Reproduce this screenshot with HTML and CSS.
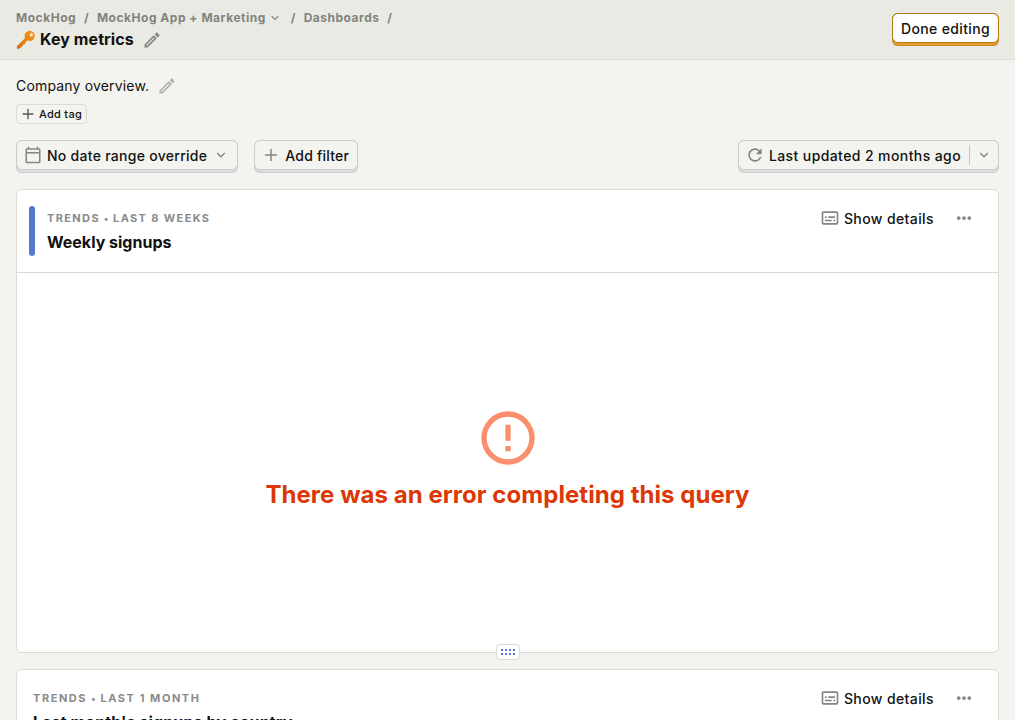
FILE: index.html
```html
<!DOCTYPE html>
<html lang="en">
<head>
<meta charset="utf-8">
<title>Key metrics</title>
<link rel="stylesheet" href="styles.css">
</head>
<body>
<svg class="sprite" aria-hidden="true">
  <symbol id="pencil" viewBox="0 0 24 24"><path d="M14.06 9.02l.92.92L5.92 19H5v-.92l9.06-9.06M17.66 3c-.25 0-.51.1-.7.29l-1.83 1.83 3.75 3.75 1.83-1.83c.39-.39.39-1.02 0-1.41l-2.34-2.34c-.2-.2-.45-.29-.71-.29zm-3.6 3.19L3 17.25V21h3.75L17.81 9.94l-3.75-3.75z"/></symbol>
  <symbol id="chevron" viewBox="0 0 24 24"><path d="M5.5 8.500l6.500 6.500 6.500-6.500" fill="none" stroke="currentColor" stroke-width="2.200"/></symbol>
  <symbol id="plus" viewBox="0 0 24 24"><path d="M11 4h2v7h7v2h-7v7h-2v-7H4v-2h7z"/></symbol>
  <symbol id="calendar" viewBox="0 0 24 24"><path d="M20 3h-1V1h-2v2H7V1H5v2H4c-1.100 0-2 .9-2 2v16c0 1.100.9 2 2 2h16c1.100 0 2-.9 2-2V5c0-1.100-.9-2-2-2zm0 18H4V10h16v11zm0-13H4V5h16v3z"/></symbol>
  <symbol id="refresh" viewBox="0 0 24 24"><path d="M17.65 6.35A7.958 7.958 0 0012 4c-4.420 0-7.990 3.580-7.990 8s3.570 8 7.990 8c3.730 0 6.840-2.550 7.730-6h-2.080A5.990 5.990 0 0112 18c-3.310 0-6-2.690-6-6s2.690-6 6-6c1.660 0 3.140.690 4.220 1.780L13 11h7V4l-2.350 2.350z"/></symbol>
  <symbol id="details" viewBox="0 0 24 24"><path d="M20 4H4c-1.100 0-2 .9-2 2v12c0 1.100.9 2 2 2h16c1.100 0 2-.9 2-2V6c0-1.100-.9-2-2-2zm0 14H4V6h16v12zM6 10h2v2H6zm0 4h8v2H6zm10 0h2v2h-2zm-6-4h8v2h-8z"/></symbol>
  <symbol id="dots" viewBox="0 0 24 24"><circle cx="5" cy="12" r="2.500"/><circle cx="12" cy="12" r="2.500"/><circle cx="19" cy="12" r="2.500"/></symbol>
  <symbol id="error" viewBox="0 0 24 24"><path d="M11 15h2v2h-2zm0-8h2v6h-2zm1-5a10 10 0 100 20 10 10 0 000-20zm0 18a8 8 0 110-16 8 8 0 010 16z"/></symbol>
</svg>

<header class="topbar">
  <div>
    <nav class="crumbs">
      <span>MockHog</span><span class="slash">/</span>
      <span>MockHog App + Marketing</span><svg class="icon crumb-caret"><use href="#chevron"/></svg><span class="slash">/</span>
      <span>Dashboards</span><span class="slash">/</span>
    </nav>
    <div class="title-row">
      <svg class="key" viewBox="0 0 20 20" role="img" aria-label="key">
        <defs><linearGradient id="gold" x1="1" y1="0" x2="0" y2="1"><stop offset="0" stop-color="#f79a12"/><stop offset="1" stop-color="#d96c12"/></linearGradient></defs>
        <path fill="url(#gold)" fill-rule="evenodd" d="M10.200 2.300c2.400-2.300 5.300-2 7.200-.1s2 5-.1 7.200c-1.700 1.700-4 1.900-5.700.9L9.300 12.500l-.2 1.500-1.600.2-.3 1.500-1.500.2-.3 1.400L3 18.700l-2 .2-.1-2.600 8.200-8.400c-.9-1.700-.6-4 1.100-5.600zM15.300 3.300a1.600 1.600 0 100 3.200 1.600 1.600 0 000-3.200z"/>
      </svg>
      <h1>Key metrics</h1>
      <svg class="icon pencil"><use href="#pencil"/></svg>
    </div>
  </div>
  <button class="btn primary"><span class="face"><span class="label">Done editing</span></span></button>
</header>

<main>
  <div class="description"><span>Company overview.</span><svg class="icon pencil faded"><use href="#pencil"/></svg></div>
  <button class="tag"><svg class="icon"><use href="#plus"/></svg>Add tag</button>

  <div class="toolbar">
    <button class="btn date"><span class="face"><svg class="icon lead"><use href="#calendar"/></svg><span class="label">No date range override</span><svg class="icon caret"><use href="#chevron"/></svg></span></button>
    <button class="btn filter"><span class="face"><svg class="icon lead"><use href="#plus"/></svg><span class="label">Add filter</span></span></button>
    <button class="btn updated"><span class="face"><svg class="icon lead"><use href="#refresh"/></svg><span class="label">Last updated 2 months ago</span><span class="divider"></span><svg class="icon caret"><use href="#chevron"/></svg></span></button>
  </div>

  <section class="card">
    <div class="card-head">
      <div class="ribbon"></div>
      <div class="meta">
        <h5>Trends <span class="bullet">•</span> Last 8 weeks</h5>
        <h4>Weekly signups</h4>
      </div>
      <div class="controls">
        <button class="show"><svg class="icon"><use href="#details"/></svg><span class="label">Show details</span></button>
        <button class="more"><svg class="icon"><use href="#dots"/></svg></button>
      </div>
    </div>
    <div class="error-state">
      <svg class="error-icon"><use href="#error"/></svg>
      <h2>There was an error completing this query</h2>
    </div>
    <div class="handle"><svg width="14" height="6"><path d="M0 0h2v2H0zM4 0h2v2H4zM8 0h2v2H8zM12 0h2v2h-2zM0 4h2v2H0zM4 4h2v2H4zM8 4h2v2H8zM12 4h2v2h-2z"/></svg></div>
  </section>

  <section class="card">
    <div class="card-head no-ribbon">
      <div class="meta country">
        <h5>Trends <span class="bullet">•</span> Last 1 month</h5>
        <h4>Last month's signups by country</h4>
      </div>
      <div class="controls">
        <button class="show"><svg class="icon"><use href="#details"/></svg><span class="label">Show details</span></button>
        <button class="more"><svg class="icon"><use href="#dots"/></svg></button>
      </div>
    </div>
  </section>
</main>
</body>
</html>
```
FILE: styles.css
```css
* { box-sizing: border-box; }
html, body { height: 100%; }
body {
  margin: 0;
  overflow: hidden;
  background: #f3f4ef;
  color: #111;
  font: 14px/20px Inter, "Noto Sans", sans-serif;
}
h1, h2, h4, h5 { margin: 0; }
button { font: inherit; color: inherit; margin: 0; border: 0; background: none; padding: 0; white-space: nowrap; }
.sprite { display: none; }
.icon { fill: currentColor; color: #858583; width: 18px; height: 18px; flex: none; display: block; }

.topbar {
  height: 60px;
  padding: 10px 16px 0;
  display: flex;
  justify-content: space-between;
  background: #e9eae4;
  border-bottom: 1px solid #dfe0da;
}
.crumbs { display: flex; align-items: center; height: 16px; font-size: 12px; font-weight: 700; line-height: 16px; letter-spacing: .52px; color: #82837d; }
.slash { margin: 0 7.800px; }
.crumb-caret { width: 12px; height: 12px; margin: 0 2px 0 3px; }
.title-row { display: flex; align-items: center; margin-top: 2px; height: 24px; }
.key { width: 20px; height: 20px; margin-right: 4px; }
h1 { padding-bottom: 2px; font-size: 16px; line-height: 24px; font-weight: 700; letter-spacing: .08px; }
.pencil { width: 20px; height: 20px; margin-left: 8px; }
.faded { opacity: .6; }

.btn { display: block; height: 33px; padding-bottom: 3px; border-radius: 6px; background: #dedede; box-shadow: inset 0 0 0 1px #ccc; font-weight: 500; }
.face { display: flex; align-items: center; height: 30px; padding: 0 8px; border: 1px solid #ccc; border-radius: 6px; background: #f3f4ef; }
.label { padding-top: 2px; letter-spacing: .35px; }
.primary { margin-top: 3px; background: #eb9d2a; box-shadow: inset 0 0 0 1px #c28926; }
.primary .face { background: #fff; border-color: #b17816; }
.lead { margin: 0 5px 0 -1px; }
.caret { width: 14px; height: 14px; margin-left: 7px; }
.date .face { padding-right: 9px; }
.date .label { letter-spacing: .28px; }
.filter .label { letter-spacing: .22px; }
.updated .label { letter-spacing: .4px; }
.updated .lead { width: 20px; height: 20px; margin: 0 4px 0 -2px; }
.updated .face { padding-right: 7px; }

main { padding: 16px 16px 0; }
.description { display: flex; align-items: center; height: 20px; letter-spacing: .17px; }
.tag { display: flex; align-items: center; height: 20px; margin-top: 8px; padding: 0 4px; border: 1px solid #dadbd4; border-radius: 4px; font-size: 11px; font-weight: 500; line-height: 16px; letter-spacing: .28px; }
.tag .icon { width: 16px; height: 16px; margin: 0 3px 0 -1px; color: #555; }
.toolbar { display: flex; gap: 16px; margin-top: 16px; }
.updated { margin-left: auto; }
.divider { width: 1px; height: 20px; background: #c4c5c0; margin-left: 8px; }

.card { position: relative; height: 464px; border: 1px solid #dadbd2; border-radius: 6px; background: #fff; margin-top: 16px; }
.card-head { display: flex; height: 83px; padding: 16px 16px 16px 12px; border-bottom: 1px solid #dadbd2; }
.no-ribbon { padding-left: 16px; }
.ribbon { width: 6px; height: 50px; border-radius: 3px; background: #5679d0; margin-right: 12px; }
h5 { margin-top: 4px; font-size: 11px; line-height: 16px; letter-spacing: 1.370px; text-transform: uppercase; color: #8a8a8a; }
.bullet { font-size: 9px; line-height: 1; letter-spacing: .8px; }
h4 { margin-top: 4px; font-size: 16px; line-height: 24px; font-weight: 700; }
.country h5 { letter-spacing: 1.550px; }
.country h4 { letter-spacing: .12px; }
.controls { margin-left: auto; display: flex; height: 24px; align-items: center; }
.show { display: flex; align-items: center; font-weight: 500; }
.show .icon { width: 20px; height: 20px; margin-right: 4px; }
.show .label { letter-spacing: .4px; }
.more { margin: 0 9px 0 21px; }
.error-state { height: 379px; padding-bottom: 9px; display: flex; flex-direction: column; align-items: center; justify-content: center; }
.error-icon { width: 64px; height: 64px; fill: #fb8e6c; }
h2 { margin-top: 9px; font-size: 24px; line-height: 32px; font-weight: 700; letter-spacing: .05px; color: #db3707; }
.handle { position: absolute; left: 479px; bottom: -8px; width: 24px; height: 16px; display: grid; place-items: center; border: 1px solid #dadbd8; border-radius: 4px; background: #fff; fill: #5375f4; }
```
